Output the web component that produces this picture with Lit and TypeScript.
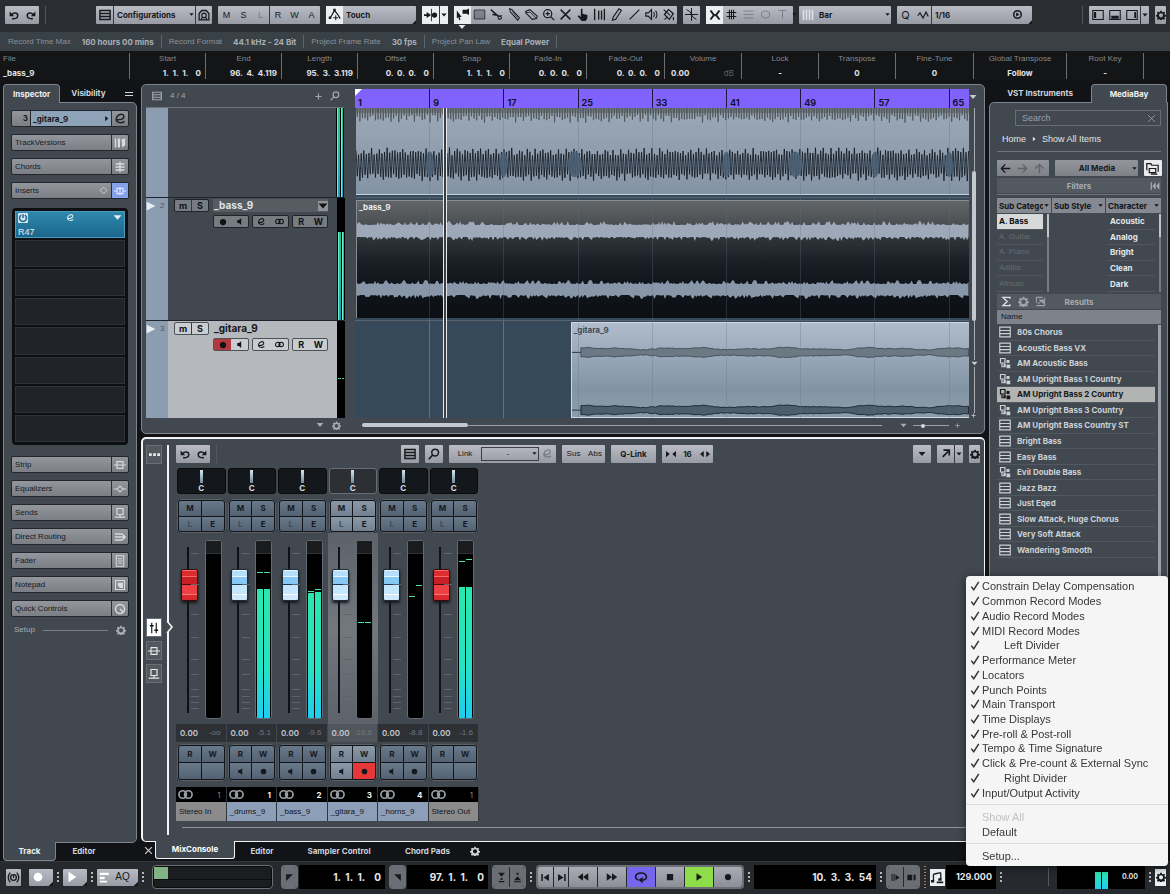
import { LitElement, html, css, svg, nothing } from "lit";
import { customElement, state } from "lit/decorators.js";

const UI_LETTERS = ["M", "S", "L", "R", "W", "A"];

/* ---------- icons, all on a 16 x 16 grid ---------- */
const line = (d: string, w = 1.5) => svg`<path d=${d} fill="none" stroke="currentColor" stroke-width=${w} />`;
const solid = (d: string) => svg`<path d=${d} fill="currentColor" fill-rule="evenodd" />`;

const ICONS: Record<string, unknown> = {
  undo: [line("M5 13.500c3 1 9 .3 9-4.500S8 3.500 4.500 7", 2.4), solid("M1 2.500v7.500h7.500z")],
  redo: [line("M11 13.500c-3 1-9 .3-9-4.500s6-5.500 9.500-2", 2.4), solid("M15 2.500v7.500H7.500z")],
  list: [line("M1.200 2h13.600v12H1.200zM1 6h14M1 10h14", 1.9)],
  house: [line("M1.500 14.500V6L5 2h6l3.500 4v8.500z", 1.7), line("M5 8.500a3 3 0 1 0 6 0a3 3 0 1 0-6 0M4 14l2-3M12 14l-2-3", 1.5)],
  touch: [line("M1 12h2l5-9 4 5 3 5", 1.5), line("M9.500 9v6M6.500 12h6", 1.2), solid("M6.500 1h3v3h-3zM1 10.500h3v3H1z")],
  autoscroll: [solid("M0 7h3V4.500L8 8l-5 3.500V9H0zM9 8a3 3 0 1 1 6 0a3 3 0 1 1-6 0z"), line("M8.500 1v14", 1)],
  pointer: [solid("M1 3l6 8H4.500l1 3.500-1.500.5-1-3.500L1 13zM8 2h5l3-1.500v8L13 7H8z")],
  range: [line("M1.500 2.500h13v11h-13z", 1), svg`<path d="M2 3h12v10H2z" fill="currentColor" opacity=".3"/>`],
  scissors: [line("M1 2l9 8M3 8l7 1", 1.700), line("M10 12a2 2 0 1 0 4 0a2 2 0 1 0-4 0M10 8.500a2 1.500 0 1 0 4 0", 1.3)],
  glue: [line("M2 1l3 1 9 10-2 3L3 5z", 1.3), line("M5 4l7 8", 1)],
  eraser: [line("M1 4l5-2 9 8-1 3-5 1-8-8z", 1.4), line("M1 6l5-1 8 8", 1)],
  zoomin: [line("M2 7a5 5 0 1 0 10 0a5 5 0 1 0-10 0M11 11l4 4M7 4.500v5M4.500 7h5", 1.5)],
  mute: [line("M2 2l12 12M14 2L2 14", 1.8)],
  hand: [solid("M6 1h2v6l6 1.500v4L12 16H7L2 10l1.500-1L6 11z"), line("M8.500 10v3", 1)],
  bars: [line("M2 1v14M7 3v11M10.500 3v11M14 1v14", 1.6)],
  pencil: [line("M11 1l3 2-7 11-4 1 1-4z", 1.4)],
  linetool: [line("M2 14L14 2", 1.5)],
  speaker: [line("M1 6h3l4-4v12l-4-4H1z", 1.4), line("M10.500 5q2 3 0 6M13 3q3.500 5 0 10", 1.3)],
  bucket: [line("M3 8l5-6 6 5-5 7z", 1.5), line("M2 2l8 7M3 14l4-3M14 11v4", 1.4)],
  color: [line("M0 8h16M8 0v16M2 2q5 2 6 6t6 6", 1.2)],
  snap: [line("M2 2l4.500 6L2 14M14 2L9.500 8 14 14", 2.6), solid("M7 6.500h2v3H7z")],
  grid: [line("M5 1v14M11 1v14M1 5h14M1 11h14M8 1v14", 1.5)],
  lines: [line("M1 3h14M1 8h14M1 13h14", 1.2)],
  menu2: [line("M0 5h16M0 11h16", 2.4)],
  cycle0: [line("M2 8a6 5 0 1 0 12 0a6 5 0 1 0-12 0", 1.3)],
  tee: [line("M2 2h12M8 2v11", 1.3)],
  gridtype: [svg`<path d="M2 1v14M6 1v14M10 1v14M14 1v14" stroke="#dfe2e8" stroke-width="2" fill="none"/>`],
  wave: [line("M1 9l3-4 4 7 4-8 3 6", 1.6)],
  qset: [line("M2.500 8a5.500 5.500 0 1 0 11 0a5.500 5.500 0 1 0-11 0", 2.2), solid("M6 5l5 3-5 3z")],
  zoneL: [line("M1 2h14v12H1z", 1.4), solid("M2.500 4h3v8h-3z")],
  zoneB: [line("M1 2h14v12H1z", 1.4), solid("M3 9h10v4H3z")],
  zoneR: [line("M1 2h14v12H1z", 1.4), solid("M11 4h2.500v8H11z")],
  gear: [solid("M6.800 1h2.400l.4 2 1.600.7 1.800-1.100 1.600 1.600-1.100 1.800.7 1.500 1.800.5v2.200l-1.900.5-.6 1.500 1 1.800-1.600 1.600-1.800-1-1.500.6-.4 2H6.800l-.4-2-1.600-.6-1.700 1-1.700-1.600 1.100-1.800L1.800 10.600 0 10.200V7.900l1.900-.4.6-1.500-1-1.800L3.100 2.600l1.800 1.100L6.400 3zM8 5.200a3.300 3.300 0 1 0 0 6.600a3.300 3.300 0 1 0 0-6.600z")],
  down: [solid("M3 5h10l-5 6z")],
  drop: [solid("M1 4h14L8 12z")],
  right: [solid("M5 2l7 6-7 6z")],
  flag: [solid("M1 1l14 7-14 7z")],
  corner: [solid("M16 6v10H6z")],
  edit: [line("M3 9.500c5 .5 10-1 9-4.500S4.500 2.500 3 7.500s5 7.500 10 4", 1.8)],
  versions: [solid("M1 2h2v12H1zM5 2h3v12H5zM10 3l5-1v9l-4 3z")],
  chords: [line("M8 1v14M2 4h12M2 8h12M2 12h12", 1.8)],
  inserts: [line("M0 8h4M12 8h4M4 4.500h8v7H4zM8 3v10", 1.4)],
  bypass: [line("M8 2l6 6-6 6M8 2L2 8l6 6", 1.5)],
  strip: [line("M0 8h4M12 8h4M4 3.500h8v9H4zM4 8h8", 1.5)],
  eq: [line("M0 8h4l4-4 4 4h4M4 8l4 4 4-4", 1.4)],
  sends: [line("M4 2h8v8H4zM8 10v4M1 13.500h14", 1.6)],
  routing: [line("M1 4h10M1 8h13M1 12h10M11 4l4 4-4 4", 1.7)],
  fader: [line("M3 1h10v14H3zM5 5h6M5 8h6M5 11h6", 1.4)],
  note: [line("M2 2h12v12H2z", 1.4), solid("M5 5h7v7H8l-3-3z")],
  knob: [line("M2 8a6 6 0 1 0 12 0a6 6 0 1 0-12 0M8 8l5 5", 2)],
  power: [line("M5 3.500a5.500 5.500 0 1 0 6 0M8 2v6", 2.4)],
  plus: [line("M8 1v14M1 8h14", 2.4)],
  search: [line("M5 6a4.500 4.500 0 1 0 9 0a4.500 4.500 0 1 0-9 0M6 9.500l-5 5.500", 2)],
  rec: [solid("M8 3a5 5 0 1 0 0 10a5 5 0 1 0 0-10z")],
  monitor: [solid("M11 2v12L7 10.500H4v-5h3z")],
  stereo: [line("M1 8a4 4 0 1 0 8 0a4 4 0 1 0-8 0M7 8a4 4 0 1 0 8 0a4 4 0 1 0-8 0", 1.8)],
  x: [line("M2 2l12 12M14 2L2 14", 2)],
  thinx: [line("M2 2l12 12M14 2L2 14", 1.3)],
  left: [line("M15 8H2M7.500 2L2 8l5.500 6", 2)],
  rightArrow: [line("M1 8h13M8.500 2L14 8l-5.500 6", 2)],
  up: [line("M8 15V2M2 8l6-6 6 6", 2)],
  folder: [line("M1 10V2h5l1 2h8v8M4 8h8v5H4zM6 15h8", 1.5)],
  rewind: [line("M2 2v12", 2), solid("M9 2v12L4 8zM15 2v12l-5-6z")],
  sigma: [line("M13 4V2H3l6 6-6 6h10v-2", 2)],
  reroute: [line("M14 2v12H2M2 10V2h9", 1.5), solid("M5 5h8v7z"), line("M4 12l6-6", 1.500)],
  preset: [line("M1 1.500h14v13H1zM1 6h14M1 10.200h14", 1.5)],
  vst: [line("M2 2h6v6H2zM4 8v5h5", 1.6), solid("M10 4h4v4h-4zM10 10h5v5h-5zM6 9h3v4H6z")],
  dots3: [solid("M0 6h4v4H0zM6 6h4v4H6zM12 6h4v4h-4z")],
  mixer: [line("M5 1v14M11 1v14", 1.5), solid("M2.500 4h5v2h-5zM8.500 10h5v2h-5z")],
  popout: [line("M4 13L12 5M5 3h8.500V11", 2.4)],
  fadeArrows: [solid("M0 3l6 5-6 5zM16 3l-6 5 6 5z")],
  outArrows: [solid("M6 3L0 8l6 5zM10 3l6 5-6 5z")],
  locL: [solid("M2 2h12L2 14z")],
  locR: [solid("M2 2h12v12z")],
  punchIn: [solid("M3 1h10L8 7zM6.500 9h3v2.500h-3zM4 13h8v2H4z")],
  punchOut: [solid("M8 6l5 6H3zM6.500 1h3v3h-3zM3 13.500h10v1.500H3z")],
  toStart: [line("M3 3v10", 2.200), solid("M13 3v10L5 8z")],
  toEnd: [line("M13 3v10", 2.200), solid("M3 3v10l8-5z")],
  rew: [solid("M8 3v10L1 8zM15 3v10L8 8z")],
  fwd: [solid("M1 3v10l7-5zM8 3v10l7-5z")],
  loop: [line("M5 11.500C-1 9 2 3.500 8 3.500s9 5.500 3 8H8", 1.8), solid("M10 8v7l-5-3.500z")],
  stop: [solid("M3 3h10v10H3z")],
  play: [solid("M4 2l9 6-9 6z")],
  latency: [line("M4.500 8a3.500 3.500 0 1 0 7 0a3.500 3.500 0 1 0-7 0M4 2Q-1 8 4 14M12 2q5 6 0 12", 1.6), solid("M7.300 5.500h1.500v3h-1.500z")],
  midirec: [solid("M1 2h11v3H1zM1 7h6v3H1zM1 12h9v2H1z")],
  notes: [line("M3 4l9-2M3 4v8M12 2v8", 1.6), solid("M0 11h4v3H0zM9 9h4v3H9zM7 13h8v2H7z")],
  precount: [line("M3 3v10M6 3v10", 1.5), solid("M8 4l6 4-6 4z")],
  ext: [solid("M2 4h7v8H2zM11 4h3v8h-3z")],
  check: [line("M2 9l4 5L14 1.500", 2.4)],
};

const ic = (name: string, size = 12, cls = "") =>
  html`<svg class="ic ${cls}" width=${size} height=${size} viewBox="0 0 16 16" aria-hidden="true">${ICONS[name]}</svg>`;

/* ---------- waveforms ---------- */
function noise(seed: number) {
  let s = seed;
  return () => ((s = (s * 1103515245 + 12345) & 0x7fffffff) / 0x7fffffff);
}

const WAVE_W = 614;

function band(top: number, bottom: number, jitter: number, seed: number): string {
  const r = noise(seed);
  const upper: string[] = [];
  const lower: string[] = [];
  for (let x = 0; x <= WAVE_W; x += 1.5) {
    upper.push(`${x} ${(top - Math.pow(r(), 3) * jitter).toFixed(1)}`);
    lower.unshift(`${x} ${(bottom + Math.pow(r(), 3) * jitter).toFixed(1)}`);
  }
  return `M${upper.join("L")}L${lower.join("L")}Z`;
}

function spikes(center: number, min: number, max: number, seed: number): string {
  const r = noise(seed);
  const out: string[] = [];
  let i = 0;
  for (let x = 0; x <= WAVE_W; x += 1.3) {
    const a = i % 3 === 0 ? max - r() * 4 : min + r() * (max - min) * 0.6;
    out.push(`${x.toFixed(1)} ${(center + (i % 2 ? a : -a)).toFixed(1)}`);
    i++;
  }
  return `M${out.join("L")}`;
}

function blob(center: number, width: number, seed: number): string {
  const r = noise(seed);
  const up: string[] = [];
  const low: string[] = [];
  for (let x = 9; x <= width; x += 3) {
    const a = 3.8 + Math.sin(x / 6.5) * 0.5 + Math.sin(x / 15) * 0.7 + (r() - 0.5);
    up.push(`${x} ${(center - a).toFixed(1)}`);
    low.unshift(`${x} ${(center + a).toFixed(1)}`);
  }
  return `M${up.join("L")}L${low.join("L")}Z`;
}

const DRUM_TOP = spikes(-3, 10, 18, 11);
const DRUM_MID = spikes(57, 9, 17, 23);
const BASS_A = band(24, 36, 4, 5);
const BASS_B = band(83, 94, 4, 9);
const GIT_A = blob(30, 400, 3);
const GIT_B = blob(89, 400, 3);

/* ---------- data ---------- */
interface Strip {
  name: string;
  num: string;
  peak: string;
  red?: boolean;
  io?: boolean;
  solo: boolean;
  selected?: boolean;
  fill?: number[];
  peaks?: number[];
}

const STRIPS: Strip[] = [
  { name: "Stereo In", num: "1", peak: "-oo", red: true, io: true, solo: false },
  { name: "_drums_9", num: "1", peak: "-5.1", solo: true, fill: [129, 129], peaks: [145, 145] },
  { name: "_bass_9", num: "2", peak: "-9.6", solo: true, fill: [125, 126], peaks: [126, 128] },
  { name: "_gitara_9", num: "3", peak: "-18.6", solo: true, selected: true, peaks: [95, 95] },
  { name: "_horns_9", num: "4", peak: "-8.8", solo: true, peaks: [121, 132] },
  { name: "Stereo Out", num: "1", peak: "-1.6", red: true, io: true, solo: true, fill: [131, 131], peaks: [156, 158] },
];

const INFO: [string, string, string?][] = [
  ["Start", "1.  1.  1.    0", "num"], ["End", "96.  4.  4.119", "num"], ["Length", "95.  3.  3.119", "num"],
  ["Offset", "0.  0.  0.    0", "num"], ["Snap", "1.  1.  1.    0", "num"], ["Fade-In", "0.  0.  0.    0", "num"],
  ["Fade-Out", "0.  0.  0.    0", "num"], ["Volume", "0.00", "vol"], ["Lock", "-"], ["Transpose", "0"],
  ["Fine-Tune", "0"], ["Global Transpose", "Follow"], ["Root Key", "-"],
];

const RESULTS: [string, boolean][] = [
  ["80s Chorus", false], ["Acoustic Bass VX", false], ["AM Acoustic Bass", true], ["AM Upright Bass 1 Country", true],
  ["AM Upright Bass 2 Country", true], ["AM Upright Bass 3 Country", true], ["AM Upright Bass Country ST", false],
  ["Bright Bass", false], ["Easy Bass", false], ["Evil Double Bass", true], ["Jazz Bazz", false], ["Just Eqed", false],
  ["Slow Attack, Huge Chorus", false], ["Very Soft Attack", false], ["Wandering Smooth", false],
];

const MENU = [
  "Constrain Delay Compensation", "Common Record Modes", "Audio Record Modes", "MIDI Record Modes", "Left Divider",
  "Performance Meter", "Locators", "Punch Points", "Main Transport", "Time Displays", "Pre-roll & Post-roll",
  "Tempo & Time Signature", "Click & Pre-count & External Sync", "Right Divider", "Input/Output Activity",
];

const BARS = [1, 9, 17, 25, 33, 41, 49, 57, 65];
const barPos = (bar: number) => ((bar - 1) / 66.2) * 100;

@customElement("app-root")
export class AppRoot extends LitElement {
  @state() private selectedResult = 4;

  static styles = css`
    :host { display: block; font-family: "Liberation Sans", Arial, sans-serif; font-size: 8px; line-height: 10px; color: #c9ced4; }
    * { box-sizing: border-box; }
    button, input, select { font: inherit; color: inherit; margin: 0; padding: 0; border: 0; background: none; border-radius: 0; }
    button { display: flex; align-items: center; justify-content: center; cursor: pointer; }
    select { appearance: none; min-width: 0; flex: 1; outline: none; }
    .b, .b button, .b select { font-family: Inter, "Liberation Sans", sans-serif; font-weight: 700; }
    .ic { display: block; flex: none; }
    .grow { flex: 1; }
    .faint { opacity: .35; }
    .app { display: flex; flex-direction: column; min-height: 100vh; background: #111316; overflow: hidden; }

    /* top toolbar */
    .toolbar { display: flex; align-items: center; height: 32px; padding: 0 4px 3px 5px; background: #2a2d32; gap: 6px; }
    .grp { display: flex; height: 18px; background: linear-gradient(#b9bcc4, #989ba4); color: #17191d; border-radius: 1px; align-items: stretch; flex: none; }
    .grp > * + .cut, .cut { border-left: 1px solid #35383e; }
    .grp button { min-width: 17px; }
    .grp .lit { background: #eceef1; }
    .grp select { padding-left: 3px; }
    .grp .ic { align-self: center; }
    .grp .ic.end { align-self: flex-end; }
    .sepv { width: 1px; height: 18px; background: #55595f; flex: none; }
    .w-cfg { width: 116px; margin-left: 44px; }
    .letters button { width: 17px; font-size: 9px; }
    .w-touch { width: 90px; }
    .w-tools button { width: 18px; min-width: 0; flex: 1; }
    .w-tools { width: 223px; position: relative; }
    .w-tools .mark { position: absolute; left: 4px; top: 17px; color: #e4e7ea; }
    .w-snap { width: 87px; }
    .w-snap button { flex: 1; }
    .w-bar { width: 92px; }
    .w-q { width: 135px; }
    .w-q .qtxt { font-size: 11px; width: 17px; font-weight: 400; text-align: center; line-height: 18px; }

    .status { display: flex; align-items: center; height: 19px; background: #394046; color: #8d9298; padding-left: 8px; }
    .status span { white-space: pre; }
    .status .b { color: #a9aeb4; margin-left: 11px; margin-right: 7px; }
    .status i { width: 1px; height: 13px; background: #5e646a; margin-right: 7px; }

    .info { display: grid; grid-template-columns: 130fr 76fr 76fr 76fr 76fr 76fr 77fr 78fr 77fr 77fr 77fr 78fr 93fr 77fr 26fr; height: 29px; background: #141517; padding-top: 2px; }
    .info > div { border-right: 1px solid #6b6f74; margin-bottom: 1px; padding: 0 4px; text-align: center; display: flex; flex-direction: column; gap: 4px; overflow: hidden; }
    .info > div:last-child { border: 0; }
    .info .k { color: #85898e; padding-top: 1px; }
    .info .v { color: #e2e4e7; white-space: pre; display: flex; justify-content: center; }
    .info .num .v { justify-content: flex-end; }
    .info .vol .v { justify-content: space-between; padding-left: 2px; }
    .info .vol em { color: #5c6065; font-style: normal; font-weight: 400; padding-right: 3px; }
    .info .file { text-align: left; padding-left: 3px; }
    .info .file .v { justify-content: flex-start; }

    /* main */
    .main { display: grid; grid-template-columns: 134px minmax(0, 1fr) 179px; gap: 4px; padding: 4px 2px 0 3px; flex: 1; }
    .col { display: flex; flex-direction: column; min-width: 0; }
    .tabs { display: flex; height: 19px; color: #d3d6da; }
    .tabs button { padding: 0 9px 1px; }
    .tabs .on { background: #41484f; border: 1px solid #7d848b; border-bottom: 0; border-radius: 4px 4px 0 0; z-index: 1; color: #eef0f2; }
    .body { flex: 1; background: #41484f; border: 1px solid #7d848b; margin-top: -1px; }
    .left .body { border-radius: 0 5px 5px 0; padding: 7px; display: flex; flex-direction: column; }
    .left .tabs .ic { margin-left: auto; align-self: center; margin-right: 4px; }
    .left .tabs .v { padding-left: 11px; }
    .tabs.low { height: 19px; margin-top: -1px; }
    .tabs.low .on { border: 1px solid #7d848b; border-top: 0; border-radius: 0 0 4px 4px; }
    .tabs.low .tk { width: 53px; }
    .tabs.low .ed { width: 56px; }

    .irow { display: flex; height: 17px; margin-bottom: 7px; border: 1px solid #23272b; border-radius: 2px; background: linear-gradient(#93979d, #7b7f85); color: #16181b; align-items: stretch; padding: 0; width: 100%; flex: none; }
    .irow .t { flex: 1; text-align: left; padding-left: 3px; line-height: 15px; }
    .irow .e { width: 17px; border-left: 1px solid #2a2e33; display: flex; align-items: center; justify-content: center; color: #d8dbdf; }
    .irow .ic { align-self: center; }
    .irow .by { display: flex; color: #d8dbdf; padding-right: 3px; }
    .irow .n { width: 18px; text-align: right; line-height: 15px; padding-right: 2px; }
    .irow .nm { flex: 1; background: #8ea2b8; border-left: 1px solid #23272b; display: flex; align-items: center; justify-content: space-between; padding: 0 1px 0 2px; }
    .irow .e.blue { background: #86a2ea; color: #dfe9ff; }
    .irow.track .e { color: #1f2226; }
    .slots { margin: 2px 1px 11px; background: #0d0f12; border-radius: 4px; padding: 3px; display: grid; grid-template-rows: 27px repeat(7, 1fr); gap: 2px; height: 237px; flex: none; }
    .slot { background: #20242a; border: 1px solid #2e3339; }
    .slot.on { background: linear-gradient(#2f88ab, #1b668c); border-color: #4c9dbb; color: #e4eef4; padding: 1px 2px; display: flex; flex-direction: column; gap: 4px; font-size: 9px; }
    .slot.on div { display: flex; justify-content: space-between; }
    .slot .pw { background: #d5e4ec; color: #1b668c; border-radius: 1px; }
    .setup { display: flex; align-items: center; gap: 8px; padding: 0 3px; color: #a7acb2; height: 12px; }
    .setup i { flex: 1; height: 1px; background: #7b8187; }

    /* project */
    .project { height: 350px; border: 1px solid #7d848b; border-radius: 5px; background: #41484f; display: grid; grid-template-columns: 198px 11px minmax(0, 1fr) 15px; grid-template-rows: 23px 310px 15px; padding-left: 4px; flex: none; }
    .thead { display: flex; align-items: center; gap: 8px; padding: 0 4px 0 6px; color: #a3a8ae; border-bottom: 1px solid #6d737a; }
    .tlist { display: flex; flex-direction: column; }
    .trow { display: grid; grid-template-columns: 22px 1fr 8px; border-bottom: 1px solid #20242a; height: 90px; }
    .trow.h2 { height: 123px; }
    .trow.h3 { height: 97px; border: 0; }
    .strip { background: #8c9db1; display: flex; align-items: flex-start; color: #e8edf3; padding-top: 3px; }
    .strip span { color: #4c5764; padding-left: 4px; }
    .tc { padding: 1px 9px 0 6px; display: grid; grid-template-columns: 35px 115px; column-gap: 4px; align-content: start; row-gap: 3px; color: #dfe3e7; }
    .sel3 .tc { background: #b5b8bd; color: #15171a; }
    .duo { display: flex; border: 1px solid #202428; border-radius: 2px; height: 13px; background: #777b82; color: #101214; flex: 1; }
    .duo button { flex: 1; font-size: 9px; }
    .sel3 .duo { background: #c9ccd1; border-color: #4e5257; }
    .duo .arm { background: #b0393d; }
    .ctl { grid-column: 2; display: flex; gap: 3px; }
    .tname { font-size: 10px; line-height: 13px; background: #575c63; padding-left: 1px; display: flex; justify-content: space-between; align-items: center; }
    .sel3 .tname { background: none; }
    .tname .ic { background: #8e9299; color: #111; }
    .tm { background: #000; padding: 0 1px; display: flex; gap: 1px; align-items: flex-end; }
    .tm i { width: 3px; background: linear-gradient(#25c48d, #22c3a8 40%, #1b9fc0); height: 100%; border-left: 1px solid #6ff0cf; }
    .h2 .tm i { height: 72%; }
    .h3 .tm { align-items: center; }
    .h3 .tm i { height: 1px; background: #3fcf9b; border: 0; margin-top: 18px; }
    .ruler { background: #8062fc; position: relative; margin-top: 4px; color: #141230; overflow: hidden; }
    .ruler span { position: absolute; top: 0; bottom: 0; border-left: 1px solid #1c1740; padding: 9px 0 0 3px; font-size: 9px; }
    .ruler span:first-of-type { border: 0; }
    .ruler svg { position: absolute; left: 0; top: 0; color: #fff; }
    .canvas { position: relative; background: #36495b; display: flex; flex-direction: column; overflow: hidden; }
    .lane { height: 90px; padding: 0 0 2px 1px; border-bottom: 1px solid #5a646f; }
    .lane.h2 { height: 123px; padding: 2px 0 2px 1px; }
    .lane.h3 { height: 97px; border: 0; padding-top: 1px; padding-bottom: 0; display: flex; }
    .ev { position: relative; height: 100%; width: 100%; background: linear-gradient(#9ba8b7, #8494a5); border-bottom: 1px solid #c8d2dc; overflow: hidden; }
    .ev svg { display: block; width: 100%; height: 100%; }
    .ev span { position: absolute; left: 2px; top: 1px; color: #eceff2; }
    .ev.bass { background: linear-gradient(#626668 0, #4c5052 22px, #2d3438 38px, #1b2026 60px, #12171d 80px, #0b0f14); border: 0; border-top: 1px solid #878d92; border-left: 1px solid #878d92; }
    .ev.git { background: linear-gradient(#b0bccb, #8294a4 70%, #8d9cab); border: 1px solid #cfd9e3; border-right: 0; width: auto; flex: 1; }
    .ev.git span { color: #3f4a55; top: 2px; }
    .lead { width: 35%; }
    .gl { position: absolute; top: 0; bottom: 0; width: 1px; background: #5f7183; opacity: .3; }
    .h3bar { position: absolute; top: 213px; height: 97px; width: 1px; background: #5f7183; }
    .ph { position: absolute; top: 0; bottom: 0; width: 4px; border: 1px solid #e6e9ec; border-width: 0 1px; background: #3a3e43; }
    .vsb { display: flex; flex-direction: column; align-items: flex-start; padding-left: 3px; color: #c5cad0; }
    .vsb.mid { justify-content: center; padding-left: 1px; }
    .vsb .a { width: 1px; flex: 1; background: #a7adb3; margin-left: 1px; }
    .vsb .a.f1 { flex: 82; margin-left: 2px; }
    .vsb .a.f2 { flex: 50; margin-left: 2px; }
    .vsb .a.f3 { flex: 60; margin-left: 2px; }
    .vsb .th { width: 4px; height: 150px; background: #c3c8ce; border-radius: 2px; }
    .vsb .ic { margin-left: -1px; }
    .foot { display: flex; align-items: center; color: #a4aab0; }
    .foot .end { display: flex; gap: 8px; padding-right: 3px; }
    .hs { flex: 1; height: 1px; background: #99a0a7; margin: 0 18px 0 7px; }
    .hs i { display: block; width: 106px; height: 4px; margin-top: -2px; background: #c3c8ce; border-radius: 2px; }
    .zoom { width: 36px; height: 1px; background: #99a0a7; margin: 0 6px; display: flex; align-items: center; }
    .zoom i { width: 4px; height: 4px; border-radius: 2px; background: #d4d8dc; margin-left: 8px; }
    .foot .pl { margin-right: 9px; }

    /* mix console */
    .mix { border: 2px solid #f1f3f5; border-width: 2px 1px 1px 2px; border-radius: 5px; background: #41484f; margin-top: 3px; flex: 1; display: flex; }
    .rail { width: 26px; padding: 0 0 8px 3px; display: flex; flex-direction: column; gap: 4px; border-right: 2px solid #f1f3f5; margin: 6px 0 6px; position: relative; }
    .rail button { width: 16px; height: 19px; background: #52585e; border: 1px solid #686e74; color: #e6e9ec; }
    .rail .on { background: #fff; color: #111; margin-top: 150px; }
    .rail .tip { position: absolute; left: 23px; top: 175px; color: #f1f3f5; }
    .console { flex: 1; min-width: 0; padding: 5px 4px 0 7px; display: flex; flex-direction: column; }
    .mbar { display: flex; gap: 6px; align-items: center; height: 19px; }
    .mbar .mid { margin-left: 178px; }
    .mbar .sq { width: 18px; }
    .linkbox { width: 58px; border: 1px solid #3c4046; height: 14px; align-self: center; display: flex; align-items: center; }
    .linkbox select { text-align: center; }
    .w9 { width: 9px; } .grp .w9 { min-width: 9px; }
    .grp .w11 { min-width: 11px; }
    .w20 { width: 20px; } .w23 { width: 23px; } .w32 { width: 32px; } .w45 { width: 45px; }
    .strips { display: grid; grid-template-columns: repeat(6, 1fr); width: 303px; margin-top: 5px; }
    .ms { display: flex; flex-direction: column; min-width: 0; }
    .pan { height: 26px; background: #14171b; border: 1px solid #0a0c0e; border-radius: 3px; margin: 0 1px; display: flex; flex-direction: column; align-items: center; color: #d8dce0; }
    .sel .pan { background: #2c3034; border-color: #686e75; }
    .pan i { width: 3px; height: 14px; background: linear-gradient(#d9e5ec, #6f8b99); margin: 1px 0 0; }
    .quad { display: grid; grid-template-columns: 1fr 1fr; grid-template-rows: 1fr 1fr; gap: 1px; background: #11151a; border: 2px solid #11151a; border-radius: 4px; overflow: hidden; margin: 5px 1px 0; height: 34px; outline: 1px solid #596068; outline-offset: -1px; }
    .quad button { background: linear-gradient(#68798a, #536272); color: #14191f; font-size: 8px; }
    .quad button.dim { color: #3f4c59; }
    .sel .quad button { background: linear-gradient(#8b99a7, #728191); }
    .quad button.armed, .sel .quad button.armed { background: #e6373a; }
    .fz { display: grid; grid-template-columns: 23px 1fr 17px; padding: 7px 5px 4px 0; height: 191px; }
    .sel .fz { background: linear-gradient(#5c6269, #72787e 50%, #5c6269); }
    .fd { writing-mode: vertical-lr; direction: rtl; appearance: none; width: 23px; height: 179px; background: linear-gradient(#0f1215, #0f1215) center / 2px 166px no-repeat; outline: none; }
    .fd::-webkit-slider-thumb { appearance: none; width: 17px; height: 32px; margin-left: 3px; border: 1px solid #1e2d3a; border-radius: 2px; background: linear-gradient(#e6f5ff 0 1px, #b4def9 1px 6px, #e6f5ff 6px 7px, #86c9f4 7px 14px, #1b3a52 14px 15px, #c5e7fd 15px 24px, #fff 24px 25px, #cfe9fb 25px); box-shadow: 0 2px 3px #14181c; }
    .fd.red::-webkit-slider-thumb { border-color: #390b0c; background: linear-gradient(#f4696a 0 1px, #dd2c30 1px 6px, #f4696a 6px 7px, #c81f25 7px 14px, #4a0c0e 14px 15px, #ee4044 15px 24px, #f77d7c 24px 25px, #d9292d 25px); }
    .ticks { display: block; width: 8px; height: 179px; margin-left: -8px; }
    .meter { background: #000; border: 1px solid #636a71; border-radius: 3px; height: 179px; display: grid; grid-template-columns: 1fr 1fr; gap: 1px; padding: 0 1px; position: relative; overflow: hidden; }
    .meter::before { content: ""; position: absolute; inset: 0 0 auto 0; height: 12px; background: #1a1b1d; border-bottom: 1px solid #303338; }
    .lane2 { position: relative; display: flex; align-items: flex-end; }
    .lane2 i { width: 100%; background: linear-gradient(#2be7ae, #25e3c4 60%, #1fcdf0); }
    .lane2 b { position: absolute; left: 0; right: 0; height: 1px; background: #49e6a4; }
    .vals { display: flex; justify-content: space-between; background: #2d3136; height: 18px; align-items: center; padding: 0 5px 0 4px; border-right: 1px solid #41484f; color: #c3c8cd; }
    .vals .b { font-weight: 600; }
    .vals em { font-style: normal; color: #70767c; }
    .sel .vals { background: #50565c; }
    .quad.rw { margin-top: 2px; height: 37px; }
    .idr { margin-top: 6px; display: flex; justify-content: space-between; align-items: center; background: #000; height: 15px; padding: 0 5px 0 2px; color: #9aa0a6; border-right: 1px solid #32373c; }
    .idr .b { color: #f2f4f6; }
    .idr.io .b { color: #80868c; font-weight: 400; }
    .nmr { height: 19px; background: #8d9fb8; color: #12161b; padding: 0 3px; display: flex; align-items: center; border-right: 1px solid #32373c; white-space: nowrap; }
    .nmr.io { background: #8b8b8b; }
    .mline { height: 1px; background: #8d949b; margin: 6px 0 0 6px; }
    .ctabs { display: flex; height: 20px; margin-top: -1px; color: #cfd2d6; align-items: stretch; }
    .ctabs button { padding-bottom: 1px; }
    .ctabs .cx { width: 14px; }
    .ctabs .on { width: 80px; background: #41484f; border: 1px solid #f1f3f5; border-top: 0; border-radius: 0 0 3px 3px; color: #fff; height: 18px; }
    .ctabs .t1 { width: 54px; } .ctabs .t2 { width: 100px; } .ctabs .t3 { width: 77px; } .ctabs .t4 { width: 18px; }

    /* media bay */
    .right .tabs .v { width: 102px; }
    .right .tabs .on { width: 76px; padding: 0 0 1px; }
    .right .body { border-radius: 5px 0 0 0; padding: 7px 6px 0 7px; }
    .srch { display: flex; align-items: center; margin-left: 18px; height: 16px; border: 1px solid #686e75; padding: 0 4px 0 6px; color: #aeb3b9; font-size: 9px; }
    .srch input { flex: 1; min-width: 0; outline: none; }
    .srch input::placeholder { color: #9ba1a7; opacity: 1; }
    .crumb { display: flex; align-items: center; gap: 5px; font-size: 9px; color: #e2e5e8; height: 26px; padding-left: 5px; border-bottom: 1px solid #6f757c; }
    .nav { display: flex; gap: 6px; margin-top: 8px; }
    .nav .grp { background: linear-gradient(#92959c, #7e8188); height: 16px; }
    .nav .go { width: 52px; } .nav .am { width: 83px; } .nav .am select { text-align: center; padding-left: 8px; } .nav .fo { width: 18px; background: #e9ebee; margin-left: auto; }
    .bar { display: flex; align-items: center; justify-content: center; position: relative; background: #535960; height: 15px; color: #a8adb3; margin-top: 2px; }
    .bar .l { position: absolute; left: 4px; display: flex; gap: 6px; color: #dfe2e5; }
    .bar .l .ic + .ic { color: #9ca2a8; }
    .bar .r { position: absolute; right: 1px; }
    .fh { display: grid; grid-template-columns: 54px 53px 1fr; gap: 1px; margin-top: 1px; padding-top: 3px; border-top: 1px solid #6f757c; }
    .fh label { display: flex; align-items: center; height: 15px; background: #858991; color: #121417; padding: 0 1px 0 2px; }
    .fl { display: grid; grid-template-columns: 52px 57px 1fr; height: 79px; padding-top: 1px; }
    .fl > div { display: flex; flex-direction: column; min-width: 0; }
    .fl button { flex: 1; justify-content: flex-start; padding-left: 2px; border-bottom: 1px solid #51585f; margin-right: 4px; }
    .fl .dim button { color: #656b72; font-family: "Liberation Sans", sans-serif; font-weight: 400; }
    .fl .dim button.pick { background: #d7d8d8; color: #0d0e10; font-family: Inter, sans-serif; font-weight: 700; }
    .thumb { border-right: 2px solid; border-image: linear-gradient(#c0c5ca 0 30%, #757b82 30%) 1; }
    .fl .chr { color: #e3e6e9; padding-left: 2px; }
    .hdr { background: #7e828a; color: #15171a; height: 14px; padding: 2px 4px; margin-top: 1px; }
    .rswrap { border-right: 3px solid #9aa0a7; height: 480px; margin-top: 1px; }
    .rs { display: flex; flex-direction: column; list-style: none; margin: 0; padding: 0 3px 0 0; height: 233px; }
    .rs li { flex: 1; display: flex; min-height: 0; }
    .rs button { flex: 1; justify-content: flex-start; gap: 6px; padding-left: 2px; border-bottom: 1px solid #51585f; color: #ccd1d6; }
    .rs .on { background: #b2b4b3; color: #15171a; }

    /* transport */
    .transport { display: flex; align-items: center; height: 33px; background: #26292d; padding: 0 4px 2px 6px; gap: 4px; color: #c9ced4; border-top: 1px solid #33363b; }
    .transport .grp { height: 17px; }
    .transport .first { min-width: 15px; }
    .transport .white { color: #fff; }
    .transport .aq { font-size: 10px; }
    .dots { width: 2px; height: 10px; background: repeating-linear-gradient(#b4b8bd 0 2px, transparent 2px 4px); flex: none; }
    .dots.hot { height: 22px; background: repeating-linear-gradient(#a87a4c 0 1px, transparent 1px 3px); }
    .frame { display: flex; height: 24px; border: 2px solid #6c7076; border-radius: 4px; background: #0b0c0d; align-items: stretch; flex: none; overflow: hidden; }
    .frame button { background: linear-gradient(#a9acb4, #8c8f97); color: #17191d; width: 15px; }
    .frame button + button { border-left: 1px solid #26292d; }
    .frame.dk button { background: #6b6e74; width: 15px; }
    .frame.one button { width: 13px; }
    .frame .w { width: 29px; }
    .frame .cyc { background: #7467ee; }
    .frame .ply { background: #8fdc4b; }
    .perf { width: 121px; display: grid; grid-template-rows: 12px 1fr; gap: 1px; padding: 1px; background: #0a0b0c; border-width: 1px; }
    .perf div { background: #1b1d1f; } .perf i { display: block; width: 14px; height: 12px; background: #82b286; }
    .disp { background: #000; height: 24px; display: flex; align-items: center; justify-content: flex-end; white-space: pre; color: #e6e8ea; font-size: 10px; padding-right: 4px; flex: none; margin-left: -3px; }
    .disp.d1 { width: 86px; } .disp.d2 { width: 81px; } .disp.d3 { width: 122px; margin-left: 0; } .disp.d4 { width: 50px; font-size: 9px; }
    .out { width: 88px; height: 24px; background: #000; display: flex; align-items: center; justify-content: flex-end; gap: 14px; padding-right: 7px; color: #dfe2e5; font-size: 7px; flex: none; }
    .out .mt { display: flex; gap: 1px; align-self: flex-end; height: 17px; }
    .out .mt i { width: 6px; background: linear-gradient(#2be7ae, #1fcdf0); }

    /* popup */
    .menu { position: fixed; right: 2px; bottom: 28px; width: 202px; background: #f5f5f6; border-radius: 4px; color: #35373a; font-size: 11px; line-height: 14px; padding: 3px 0; z-index: 5; box-shadow: 0 2px 8px rgba(0, 0, 0, .5); }
    .menu .g { display: flex; flex-direction: column; height: 221px; }
    .menu button { flex: 1; display: flex; justify-content: flex-start; gap: 2px; padding-left: 4px; width: 100%; min-height: 14px; white-space: nowrap; }
    .menu .in { gap: 24px; }
    .menu .plain { padding-left: 16px; height: 15px; }
    .menu .off { color: #c0c1c4; }
    .menu hr { border: 0; border-top: 1px solid #dcdcde; margin: 4px 0; height: 0; }
  `;

  private opt(label: string, text: string, arrow = true) {
    return html`<select aria-label=${label}><option>${text}</option></select>${arrow ? ic("down", 7) : nothing}`;
  }

  private toolbar() {
    const tools = ["pointer", "range", "scissors", "glue", "eraser", "zoomin", "mute", "hand", "bars", "pencil", "linetool", "speaker", "bucket"];
    return html`<header class="toolbar">
      <div class="grp"><button aria-label="Undo">${ic("undo", 10)}</button><button aria-label="Redo">${ic("redo", 10)}</button></div>
      <i class="sepv"></i>
      <div class="grp b w-cfg"><button aria-label="Window layout">${ic("list", 12)}</button><span class="cut"></span>${this.opt("Configurations", "Configurations")}<button class="cut" aria-label="Constrain delay compensation">${ic("house", 12)}</button></div>
      <div class="grp letters">${UI_LETTERS.map((l) => html`<button class=${l === "R" ? "cut" : ""}><span class=${l === "L" ? "faint" : ""}>${l}</span></button>`)}</div>
      <div class="grp b w-touch"><button class="lit" aria-label="Automation">${ic("touch", 13)}</button>${this.opt("Automation mode", "Touch", false)}${ic("corner", 6, "end")}</div>
      <div class="grp"><button class="lit" aria-label="Auto-scroll">${ic("autoscroll", 14)}</button><button class="lit cut w9" aria-label="Auto-scroll options">${ic("drop", 6)}</button></div>
      <div class="grp w-tools">${tools.map((t, i) => html`<button class=${i ? "" : "lit"} aria-label=${t}>${ic(t, 13)}</button>`)}${ic("drop", 8, "mark")}</div>
      <div class="grp"><button aria-label="Color tool">${ic("color", 13)}</button></div>
      <div class="grp w-snap"><button class="lit" aria-label="Snap">${ic("snap", 12)}</button><button aria-label="Grid">${ic("grid", 11)}</button>${["lines", "cycle0", "tee"].map((t) => html`<button class="faint" aria-label=${t}>${ic(t, 11)}</button>`)}${ic("down", 7)}</div>
      <div class="grp b w-bar"><button aria-label="Grid type">${ic("gridtype", 12)}</button><select aria-label="Grid type value"><option>Bar</option></select>${ic("down", 7)}</div>
      <div class="grp b w-q"><span class="qtxt">Q</span><button aria-label="Iterative quantize">${ic("wave", 12)}</button><span class="cut"></span>${this.opt("Quantize preset", "1/16", false)}<button aria-label="Quantize setup">${ic("qset", 11)}</button>${ic("corner", 6, "end")}</div>
      <span class="grow"></span><i class="sepv"></i>
      <div class="grp"><button aria-label="Left zone">${ic("zoneL", 12)}</button><button aria-label="Lower zone">${ic("zoneB", 12)}</button><button aria-label="Right zone">${ic("zoneR", 12)}</button><button class="cut w9" aria-label="Zones menu">${ic("drop", 6)}</button></div>
      <div class="grp"><button class="w11" aria-label="Toolbar setup">${ic("gear", 10)}</button></div>
    </header>`;
  }

  private status() {
    const rows = [["Record Time Max", "160 hours 00 mins"], ["Record Format", "44.1 kHz - 24 Bit"], ["Project Frame Rate", "30 fps"], ["Project Pan Law", "Equal Power"]];
    return html`<div class="status">${rows.map(([k, v]) => html`<span>${k}</span><span class="b">${v}</span><i></i>`)}</div>
      <div class="info">
        <div class="file"><span class="k">File</span><span class="v b">_bass_9</span></div>
        ${INFO.map(([k, v, c]) => html`<div class=${c ?? ""}><span class="k">${k}</span><span class="v b">${v}${c === "vol" ? html`<em>dB</em>` : nothing}</span></div>`)}
        <div></div>
      </div>`;
  }

  private inspector() {
    const row = (t: string, icon: string, extra: unknown = nothing, blue = false) =>
      html`<button class="irow"><span class="t">${t}</span>${extra}<span class="e ${blue ? "blue" : ""}">${ic(icon, 12)}</span></button>`;
    return html`<section class="col left">
      <div class="tabs b"><button class="on">Inspector</button><button class="v">Visibility</button>${ic("menu2", 8)}</div>
      <div class="body">
        <div class="irow track b"><span class="n">3</span><span class="nm"><span>_gitara_9</span>${ic("right", 7)}</span><button class="e" aria-label="Edit channel">${ic("edit", 13)}</button></div>
        ${row("TrackVersions", "versions")}${row("Chords", "chords")}${row("Inserts", "inserts", html`<span class="by">${ic("bypass", 9)}</span>`, true)}
        <div class="slots">
          <div class="slot on"><div>${ic("power", 10, "pw")}${ic("edit", 9)}${ic("drop", 9)}</div><span>R47</span></div>
          ${Array.from({ length: 7 }, () => html`<div class="slot"></div>`)}
        </div>
        ${row("Strip", "strip")}${row("Equalizers", "eq")}${row("Sends", "sends")}${row("Direct Routing", "routing")}${row("Fader", "fader")}${row("Notepad", "note")}${row("Quick Controls", "knob")}
        <div class="setup"><span>Setup</span><i></i>${ic("gear", 10)}</div>
      </div>
      <div class="tabs low b"><button class="on tk">Track</button><button class="ed">Editor</button></div>
    </section>`;
  }

  private track(n: number, name: string) {
    const sel = n === 3;
    return html`<div class="trow h${n} ${sel ? "sel3" : ""}">
      <div class="strip">${ic("flag", 10)}<span>${n}</span></div>
      <div class="tc">
        <div class="duo b"><button>m</button><button class="cut">S</button></div>
        <div class="tname b"><span>${name}</span>${sel ? nothing : ic("drop", 10)}</div>
        <div class="ctl b">
          <div class="duo"><button class=${sel ? "arm" : ""} aria-label="Record enable">${ic("rec", 10)}</button><button aria-label="Monitor">${ic("monitor", 9)}</button></div>
          <div class="duo"><button aria-label="Edit">${ic("edit", 9)}</button><button aria-label="Freeze">${ic("stereo", 9)}</button></div>
          <div class="duo"><button>R</button><button>W</button></div>
        </div>
      </div>
      <div class="tm"><i></i><i></i></div>
    </div>`;
  }

  private project() {
    const view = (h: number, w: number, inner: unknown) =>
      html`<svg viewBox="0 0 ${w} ${h}" preserveAspectRatio="none" aria-hidden="true">${inner}</svg>`;
    return html`<div class="project">
      <div class="thead">${ic("list", 10)}<span>4 / 4</span><span class="grow"></span>${ic("plus", 7)}${ic("search", 10)}</div>
      <span></span>
      <div class="ruler b">${BARS.map((b) => html`<span style="left:${barPos(b)}%">${b}</span>`)}<svg width="7" height="7" viewBox="0 0 7 7"><path d="M0 0h7L0 7z" fill="currentColor"/></svg></div>
      <div class="vsb mid"><button aria-label="Ruler format">${ic("drop", 8)}</button></div>

      <div class="tlist">
        <div class="trow"><div class="strip"></div><div></div><div class="tm"><i></i><i></i></div></div>
        ${this.track(2, "_bass_9")}${this.track(3, "_gitara_9")}
      </div>
      <span></span>
      <div class="canvas">
        <div class="lane"><div class="ev">${view(87, WAVE_W, svg`
          <path d="M0 0h614v5H0z" fill="#6a7074" opacity=".6"/>
          <path d=${DRUM_TOP} stroke="#4a5052" stroke-width=".8" fill="none"/>
          <path d=${DRUM_MID} stroke="#151c25" stroke-width=".9" fill="none"/>
          <path d="M0 54h614v6H0z" fill="#4f6174" opacity=".4"/>
          ${[74, 148, 219, 371, 440, 520, 594].map((x) => svg`<ellipse cx=${x} cy="57" rx=${x === 219 || x === 440 ? 7 : 4} ry="13" fill="#4b6074" opacity=".85"/>`)}`)}</div></div>
        <div class="lane h2"><div class="ev bass">${view(117, WAVE_W, svg`<path d=${BASS_A} fill="#9da9b8"/><path d=${BASS_B} fill="#8796a9"/>`)}<span class="b">_bass_9</span></div></div>
        <div class="lane h3"><div class="lead"></div><div class="ev git">${view(96, 400, svg`
          <path d="M0 30h10M0 89h10" stroke="#2a3641"/>
          <path d=${GIT_A} fill="#6c7985" stroke="#45515c"/>
          <path d=${GIT_B} fill="#4c5d6c" stroke="#1d2935"/>`)}<span class="b">_gitara_9</span></div></div>
        ${BARS.slice(1).map((b) => html`<i class="gl" style="left:${barPos(b)}%"></i>`)}
        ${[9, 17].map((b) => html`<i class="h3bar" style="left:${barPos(b)}%"></i>`)}
        <i class="ph" style="left:${barPos(10.5)}%"></i>
      </div>
      <div class="vsb"><i class="a f1"></i><i class="th"></i><i class="a f2"></i>${ic("drop", 7)}<i class="a f3"></i>${ic("plus", 5)}</div>

      <div class="foot"><span class="grow"></span><span class="end">${ic("drop", 8)}${ic("gear", 9)}</span></div>
      <span></span>
      <div class="foot"><div class="hs"><i></i></div>${ic("drop", 7)}<div class="zoom"><i></i></div>${ic("plus", 5, "pl")}</div>
      <span></span>
    </div>`;
  }

  private strip(s: Strip) {
    return html`<div class="ms ${s.selected ? "sel" : ""}">
      <div class="pan b"><i></i><span>C</span></div>
      <div class="quad b"><button>M</button><button>${s.solo ? "S" : ""}</button><button class="dim">L</button><button>E</button></div>
      <div class="fz">
        <input class="fd ${s.red ? "red" : ""}" type="range" min="0" max="100" value="80" aria-label="${s.name} level" />
        <svg class="ticks" viewBox="0 0 8 179" aria-hidden="true"><path d="M0 13.500h8M0 44.500h8M0 74.500h8M0 97.500h8M0 119.500h8M0 134.500h8M0 149.500h8M0 156.500h8M0 162.500h8M0 168.500h8" stroke="#5d646b" /></svg>
        <div class="meter">${[0, 1].map((i) => html`<div class="lane2">${s.fill ? html`<i style="height:${s.fill[i]}px"></i>` : nothing}${s.peaks ? html`<b style="bottom:${s.peaks[i]}px"></b>` : nothing}</div>`)}</div>
      </div>
      <div class="vals"><span class="b">0.00</span><em>${s.peak}</em></div>
      <div class="quad rw b"><button>R</button><button>W</button>
        <button aria-label="Monitor">${s.io ? nothing : ic("monitor", 9)}</button><button class=${s.selected ? "armed" : ""} aria-label="Record enable">${s.io ? nothing : ic("rec", 9)}</button></div>
      <div class="idr ${s.io ? "io" : ""}">${ic("stereo", 15)}<span class="b">${s.num}</span></div>
      <div class="nmr ${s.io ? "io" : ""}">${s.name}</div>
    </div>`;
  }

  private mixer() {
    return html`<div class="mix">
      <div class="rail">
        <button aria-label="Options">${ic("dots3", 11)}</button>
        <button class="on" aria-label="Faders">${ic("mixer", 12)}</button>
        <button aria-label="Inserts">${ic("strip", 12)}</button>
        <button aria-label="Sends">${ic("sends", 12)}</button>
        <svg class="tip" width="8" height="14" viewBox="0 0 8 14"><path d="M0 1h1l5 6-5 6H0z" fill="#41484f"/><path d="M1 1l5 6-5 6" fill="none" stroke="currentColor" stroke-width="1.600"/></svg>
      </div>
      <div class="console">
        <div class="mbar">
          <div class="grp"><button aria-label="Undo">${ic("undo", 10)}</button><button aria-label="Redo">${ic("redo", 10)}</button></div>
          <i class="sepv"></i>
          <div class="grp mid"><button class="sq" aria-label="Channel list">${ic("list", 12)}</button></div>
          <div class="grp"><button class="sq" aria-label="Find channel">${ic("search", 12)}</button></div>
          <div class="grp"><button class="w32">Link</button><span class="linkbox">${this.opt("Link group", "-")}</span><button aria-label="Edit link">${ic("edit", 11, "faint")}</button></div>
          <div class="grp"><button class="w23">Sus</button><button class="w20">Abs</button></div>
          <div class="grp b"><button class="w45">Q-Link</button></div>
          <div class="grp b"><button aria-label="Narrow">${ic("fadeArrows", 10)}</button><button>16</button><button aria-label="Widen">${ic("outArrows", 10)}</button></div>
          <span class="grow"></span>
          <div class="grp"><button class="sq" aria-label="Function menu">${ic("drop", 8)}</button></div>
          <div class="grp"><button aria-label="Open in window">${ic("popout", 11)}</button><button class="cut w9" aria-label="Window menu">${ic("drop", 6)}</button></div>
          <div class="grp"><button class="w11" aria-label="Toolbar setup">${ic("gear", 10)}</button></div>
        </div>
        <div class="strips">${STRIPS.map((s) => this.strip(s))}</div>
        <div class="mline"></div>
      </div>
    </div>
    <div class="ctabs b"><button class="cx" aria-label="Close lower zone">${ic("x", 9)}</button><button class="on">MixConsole</button><button class="t1">Editor</button><button class="t2">Sampler Control</button><button class="t3">Chord Pads</button><button class="t4" aria-label="Tab setup">${ic("gear", 10)}</button></div>`;
  }

  private media() {
    return html`<section class="col right">
      <div class="tabs b"><button class="v">VST Instruments</button><button class="on">MediaBay</button></div>
      <div class="body">
        <label class="srch"><input type="text" placeholder="Search" aria-label="Search" />${ic("thinx", 9)}</label>
        <div class="crumb"><span>Home</span>${ic("right", 6)}<span>Show All Items</span></div>
        <div class="nav">
          <div class="grp go"><button aria-label="Back">${ic("left", 11)}</button><button aria-label="Forward">${ic("rightArrow", 11, "faint")}</button><button aria-label="Up">${ic("up", 11, "faint")}</button></div>
          <div class="grp b am">${this.opt("Media type", "All Media")}</div>
          <div class="grp fo"><button aria-label="Locations">${ic("folder", 13)}</button></div>
        </div>
        <div class="bar b"><span>Filters</span><span class="r">${ic("rewind", 10)}</span></div>
        <div class="fh b">${["Sub Category", "Sub Style", "Character"].map((t) => html`<label>${this.opt(t, t)}</label>`)}</div>
        <div class="fl b">
          <div class="dim thumb">${["A. Bass", "A. Guitar", "A. Piano", "Adlibs", "African"].map((t, i) => html`<button class=${i ? "" : "pick"}>${t}</button>`)}</div>
          <div></div>
          <div class="chr thumb">${["Acoustic", "Analog", "Bright", "Clean", "Dark"].map((t) => html`<button>${t}</button>`)}</div>
        </div>
        <div class="bar b"><span class="l">${ic("sigma", 11)}${ic("gear", 11)}${ic("reroute", 11)}</span><span>Results</span></div>
        <div class="hdr">Name</div>
        <div class="rswrap"><ul class="rs b">${RESULTS.map(([t, v], i) => html`<li><button class=${i === this.selectedResult ? "on" : ""} @click=${() => (this.selectedResult = i)}>${ic(v ? "vst" : "preset", 12)}${t}</button></li>`)}</ul></div>
      </div>
    </section>`;
  }

  private transport() {
    const dots = html`<i class="dots"></i>`;
    return html`<footer class="transport">
      <div class="grp"><button class="first" aria-label="Delay compensation">${ic("latency", 13)}</button></div>
      <span></span>
      <div class="grp"><button class="white" aria-label="Record mode">${ic("rec", 14)}</button>${ic("corner", 7, "end")}</div>${dots}
      <div class="grp"><button class="white" aria-label="Audio record mode">${ic("play", 14)}</button>${ic("corner", 7, "end")}</div>${dots}
      <div class="grp"><button class="white" aria-label="MIDI record mode">${ic("midirec", 13)}</button><button class="aq">AQ</button>${ic("corner", 7, "end")}</div>${dots}
      <span></span>
      <div class="frame perf"><div><i></i></div><div></div></div>
      <span></span>
      <div class="frame dk one"><button aria-label="Left locator">${ic("locL", 9)}</button></div>
      <div class="disp b d1">1.  1.  1.    0</div>
      <div class="frame dk one"><button aria-label="Right locator">${ic("locR", 9)}</button></div>
      <div class="disp b d2">97.  1.  1.    0</div>
      <div class="frame dk"><button aria-label="Punch in">${ic("punchIn", 11)}</button><button aria-label="Punch out">${ic("punchOut", 11)}</button></div>${dots}
      <div class="frame"><button aria-label="To start">${ic("toStart", 11)}</button><button aria-label="To end">${ic("toEnd", 11)}</button><button class="w" aria-label="Rewind">${ic("rew", 12)}</button><button class="w" aria-label="Forward">${ic("fwd", 12)}</button><button class="w cyc" aria-label="Cycle">${ic("loop", 14)}</button><button class="w" aria-label="Stop">${ic("stop", 10)}</button><button class="w ply" aria-label="Play">${ic("play", 10)}</button><button class="w" aria-label="Record">${ic("rec", 10)}</button></div>${dots}
      <div class="disp b d3">10.  3.  3.  54</div>${dots}
      <div class="frame dk"><button aria-label="Pre-roll">${ic("precount", 11)}</button><button aria-label="Post-roll">${ic("ext", 11)}</button></div>
      <i class="dots hot"></i>
      <div class="grp"><button class="lit first" aria-label="Tempo track">${ic("notes", 13)}</button></div>
      <div class="disp b d4">129.000</div>
      ${dots}<span class="grow"></span><i class="sepv"></i><span></span>
      <div class="out b"><span class="mt"><i></i><i></i></span><span>0.00</span></div>${dots}
      <div class="grp"><button class="lit w11" aria-label="Transport setup">${ic("gear", 10)}</button></div>
    </footer>`;
  }

  private popup() {
    return html`<div class="menu" role="menu">
      <div class="g">${MENU.map((t) => html`<button role="menuitemcheckbox" aria-checked="true" class=${t.endsWith("Divider") ? "in" : ""}>${ic("check", 10)}${t}</button>`)}</div>
      <hr />
      <button class="plain off" role="menuitem">Show All</button>
      <button class="plain" role="menuitem">Default</button>
      <hr />
      <button class="plain" role="menuitem">Setup...</button>
    </div>`;
  }

  render() {
    return html`<div class="app">
      ${this.toolbar()}${this.status()}
      <main class="main">
        ${this.inspector()}
        <section class="col">${this.project()}${this.mixer()}</section>
        ${this.media()}
      </main>
      ${this.transport()}${this.popup()}
    </div>`;
  }
}
